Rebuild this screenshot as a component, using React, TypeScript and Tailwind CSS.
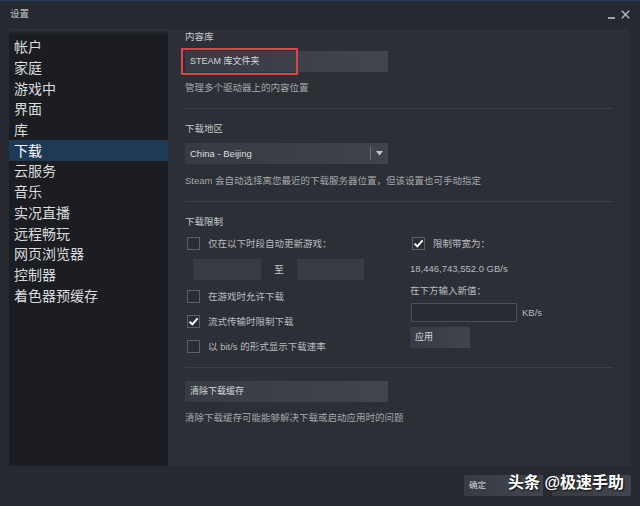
import React from 'react';

const FONT = "'Liberation Sans', 'Noto Sans CJK SC', sans-serif";

const navItems = [
  '帐户',
  '家庭',
  '游戏中',
  '界面',
  '库',
  '下载',
  '云服务',
  '音乐',
  '实况直播',
  '远程畅玩',
  '网页浏览器',
  '控制器',
  '着色器预缓存',
];

function Checkbox({ checked, label }: { checked?: boolean; label: string }) {
  return (
    <div className="flex items-center h-[13px] ml-[2px]">
      <div className="w-[13px] h-[13px] border border-[#5c5f65] bg-[#2a2d33] flex items-center justify-center">
        {checked && (
          <svg width="11" height="11" viewBox="0 0 11 11">
            <path d="M1.5 5.6 L4.3 8.4 L9.6 2.4" fill="none" stroke="#ffffff" strokeWidth="2" />
          </svg>
        )}
      </div>
      <span className="ml-[8px] text-[9.5px] text-[#b9bcc0] leading-none whitespace-nowrap">{label}</span>
    </div>
  );
}

function Button({ label, className }: { label?: string; className: string }) {
  return (
    <div
      className={`flex items-center pl-[5px] bg-linear-to-r from-[#383b42] to-[#41454e] text-[9px] text-[#d4d6d9] leading-none ${className}`}
    >
      {label}
    </div>
  );
}

export default function App() {
  return (
    <div
      className="relative w-[640px] h-[506px] bg-[#26292f] border-t border-[#22395a] flex flex-col overflow-hidden"
      style={{ fontFamily: FONT }}
    >
      {/* Title bar */}
      <div className="h-[28px] flex items-center justify-between pl-[10px] pr-[10px]">
        <span className="text-[9.5px] text-[#c3c5c8] -mt-[1px]">设置</span>
        <div className="flex items-center gap-[6px] -mt-[2px]">
          <div className="w-[7px] h-[2px] bg-[#9ea1a6] mt-[7px]" />
          <svg width="9" height="9" viewBox="0 0 9 9">
            <path d="M0.8 0.8 L8.2 8.2 M8.2 0.8 L0.8 8.2" stroke="#b3b6ba" strokeWidth="1.4" />
          </svg>
        </div>
      </div>

      <div className="flex ml-[9px] h-[437px]">
        {/* Sidebar */}
        <div className="w-[159px] h-full bg-[#1b1d22] flex flex-col">
          <div className="h-[6px] bg-linear-to-b from-[#2e323a] to-[#1b1d22]" />
          <div className="pt-[2px] flex flex-col">
            {navItems.map((item) => (
              <div
                key={item}
                className={`h-[20.7px] flex items-center pl-[5px] text-[14px] leading-none ${
                  item === '下载' ? 'bg-[#1e3a56] text-white' : 'text-[#dadcde]'
                }`}
              >
                {item}
              </div>
            ))}
          </div>
        </div>

        {/* Content */}
        <div className="w-[462px] h-full bg-[#2c2f35] pl-[17px] pt-[1px] flex flex-col text-[9.5px] leading-[13px]">
          <div className="text-[#c9cbce]">内容库</div>

          <div className="relative mt-[8px] w-[203px]">
            <Button label="STEAM 库文件夹" className="w-[203px] h-[21px]" />
            <div className="absolute -left-[4px] -top-[3px] w-[117px] h-[27px] border-2 border-[#e04347] rounded-[1px]" />
          </div>

          <div className="mt-[9px] text-[#a4a7ab]">管理多个驱动器上的内容位置</div>

          <div className="mt-[14px] w-[428px] h-px bg-[#3c3f46]" />

          <div className="mt-[13px] text-[#c9cbce]">下载地区</div>

          <div className="mt-[8px] w-[203px] h-[21px] bg-linear-to-r from-[#383b42] to-[#3f434b] flex items-center pl-[5px] relative">
            <span className="text-[#dcdee0]">China - Beijing</span>
            <div className="absolute left-[185px] top-[4px] w-px h-[13px] bg-[#6c6f75]" />
            <svg className="absolute left-[191px] top-[8px]" width="7" height="5" viewBox="0 0 7 5">
              <path d="M0 0 L7 0 L3.5 4.5 Z" fill="#c6c8cb" />
            </svg>
          </div>

          <div className="mt-[10px] text-[#a4a7ab] whitespace-nowrap">
            Steam 会自动选择离您最近的下载服务器位置，但该设置也可手动指定
          </div>

          <div className="mt-[14px] w-[428px] h-px bg-[#3c3f46]" />

          <div className="mt-[13px] text-[#c9cbce]">下载限制</div>

          <div className="flex">
            <div className="w-[225px] flex flex-col">
              <div className="mt-[9px]">
                <Checkbox label="仅在以下时段自动更新游戏：" />
              </div>
              <div className="mt-[9px] ml-[8px] flex items-center h-[21px]">
                <div className="w-[68px] h-[21px] bg-[#383b42]" />
                <span className="w-[36px] text-center text-[#c9cbce]">至</span>
                <div className="w-[67px] h-[21px] bg-[#383b42]" />
              </div>
              <div className="mt-[10px]">
                <Checkbox label="在游戏时允许下载" />
              </div>
              <div className="mt-[12px]">
                <Checkbox checked label="流式传输时限制下载" />
              </div>
              <div className="mt-[12px]">
                <Checkbox label="以 bit/s 的形式显示下载速率" />
              </div>
            </div>

            <div className="flex flex-col">
              <div className="mt-[9px]">
                <Checkbox checked label="限制带宽为：" />
              </div>
              <div className="mt-[12px] text-[#b9bcc0]">18,446,743,552.0 GB/s</div>
              <div className="mt-[9px] text-[#b9bcc0]">在下方输入新值：</div>
              <div className="mt-[6px] flex items-center">
                <div className="ml-[1px] w-[106px] h-[19px] bg-[#292c32] border border-[#4a4e57]" />
                <span className="ml-[5px] text-[#b9bcc0]">KB/s</span>
              </div>
              <Button label="应用" className="mt-[5px] w-[60px] h-[21px]" />
            </div>
          </div>

          <div className="mt-[14px] w-[428px] h-px bg-[#3c3f46]" />

          <Button label="清除下载缓存" className="mt-[13px] w-[203px] h-[21px]" />

          <div className="mt-[9px] text-[#a4a7ab]">清除下载缓存可能能够解决下载或启动应用时的问题</div>
        </div>
      </div>

      {/* Bottom buttons (the second one is covered by the watermark) */}
      <div className="flex justify-end gap-[9px] pr-[9px] mt-[9px]">
        <Button label="确定" className="w-[79px] h-[21px] !text-[8.5px]" />
        <Button className="w-[79px] h-[21px]" />
      </div>

      {/* Watermark */}
      <div
        className="absolute left-[508px] top-[471px] text-[16px] font-bold text-white leading-[22px] whitespace-nowrap"
        style={{ textShadow: '1px 1px 2px rgba(0,0,0,0.9)' }}
      >
        头条 @极速手助
      </div>
    </div>
  );
}
